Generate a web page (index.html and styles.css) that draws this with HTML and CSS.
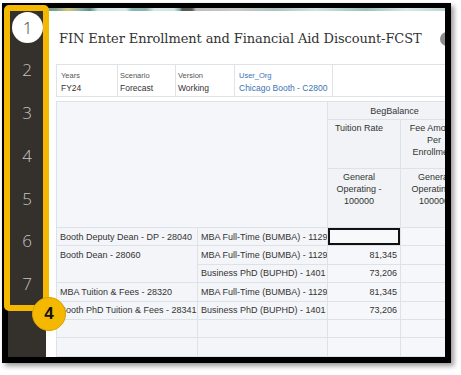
FILE: index.html
```html
<!DOCTYPE html>
<html>
<head>
<meta charset="utf-8">
<link rel="stylesheet" href="styles.css">
</head>
<body>
<div class="shot">
  <div class="frame">
    <aside class="rail">
      <ol class="steps">
        <li class="step active"><span class="dot">1</span></li>
        <li class="step">2</li>
        <li class="step">3</li>
        <li class="step">4</li>
        <li class="step">5</li>
        <li class="step">6</li>
        <li class="step">7</li>
      </ol>
    </aside>
    <main class="main">
      <div class="banner"></div>
      <header class="title-row">
        <h1 class="title">FIN Enter Enrollment and Financial Aid Discount-FCST</h1>
        <span class="info">i</span>
      </header>
      <div class="pov">
        <div class="pov-cell w1"><span class="pov-label">Years</span><span class="pov-value">FY24</span></div>
        <div class="pov-cell w2"><span class="pov-label">Scenario</span><span class="pov-value">Forecast</span></div>
        <div class="pov-cell w3"><span class="pov-label">Version</span><span class="pov-value">Working</span></div>
        <div class="pov-cell w4 link"><span class="pov-label">User_Org</span><span class="pov-value">Chicago Booth - C2800</span></div>
      </div>
      <table class="grid">
        <colgroup>
          <col class="c1"><col class="c2"><col class="c3"><col class="c4">
        </colgroup>
        <tr class="h1">
          <td class="corner" rowspan="3" colspan="2"></td>
          <th class="colhead span2" colspan="2">BegBalance</th>
        </tr>
        <tr class="h2">
          <th class="colhead top">Tuition Rate</th>
          <th class="colhead top narrow">Fee Amount Per Enrollment</th>
        </tr>
        <tr class="h3">
          <th class="colhead top">General Operating - 100000</th>
          <th class="colhead top narrow">General Operating - 100000</th>
        </tr>
        <tr class="row">
          <td class="rh">Booth Deputy Dean - DP - 28040</td>
          <td class="rh">MBA Full-Time (BUMBA) - 1129</td>
          <td class="num sel"></td>
          <td class="num"></td>
        </tr>
        <tr class="row">
          <td class="rh span" rowspan="2">Booth Dean - 28060</td>
          <td class="rh">MBA Full-Time (BUMBA) - 1129</td>
          <td class="num">81,345</td>
          <td class="num"></td>
        </tr>
        <tr class="row">
          <td class="rh">Business PhD (BUPHD) - 1401</td>
          <td class="num">73,206</td>
          <td class="num"></td>
        </tr>
        <tr class="row">
          <td class="rh">MBA Tuition &amp; Fees - 28320</td>
          <td class="rh">MBA Full-Time (BUMBA) - 1129</td>
          <td class="num">81,345</td>
          <td class="num"></td>
        </tr>
        <tr class="row">
          <td class="rh">Booth PhD Tuition &amp; Fees - 28341</td>
          <td class="rh">Business PhD (BUPHD) - 1401</td>
          <td class="num">73,206</td>
          <td class="num"></td>
        </tr>
        <tr class="row">
          <td class="rh"></td><td class="rh"></td><td class="num"></td><td class="num"></td>
        </tr>
        <tr class="row">
          <td class="rh"></td><td class="rh"></td><td class="num"></td><td class="num"></td>
        </tr>
      </table>
    </main>
  </div>
  <div class="callout"></div>
  <div class="badge">4</div>
</div>
</body>
</html>
```
FILE: styles.css
```css
html, body {
  margin: 0;
  padding: 0;
  background: #ffffff;
}

.shot {
  position: relative;
  width: 461px;
  height: 375px;
  overflow: hidden;
}

.frame {
  margin: 3px 0 0 2px;
  width: 437px;
  height: 349px;
  border-style: solid;
  border-color: #000;
  border-width: 5px 6px 6px 6px;
  display: flex;
  overflow: hidden;
  background: #fff;
  box-shadow: 3px 3px 5px rgba(0, 0, 0, 0.4);
}

/* left step rail */
.rail {
  flex: none;
  width: 38px;
  background: #34302c;
}

.steps {
  list-style: none;
  margin: -2.4px 0 0 0;
  padding: 0;
  display: flex;
  flex-direction: column;
}

.step {
  height: 42.8px;
  display: flex;
  align-items: center;
  justify-content: center;
  font-family: "Open Sans", "Noto Sans", sans-serif;
  font-weight: 300;
  font-size: 17px;
  color: #c4c4c4;
}

.dot {
  width: 31px;
  height: 31px;
  border-radius: 50%;
  background: #fff;
  color: #3a3a3a;
  display: flex;
  align-items: center;
  justify-content: center;
  margin-left: 1px;
}

/* main */
.main {
  flex: 1;
  min-width: 0;
  display: flex;
  flex-direction: column;
  overflow: hidden;
}

.banner {
  flex: none;
  height: 3px;
  background: linear-gradient(90deg,
    #6e978f 0px, #7aa095 10px, #d6c37d 22px, #8fb0a4 34px, #5f8f8a 44px,
    #cfe4e4 52px, #d9eaea 80px, #88b4b2 86px, #8ab5b3 100px, #d5e7e7 108px,
    #d2e5e5 128px, #7aa7a5 134px, #565656 136px, #5a5a5a 146px, #bdbdbd 150px,
    #c8c8c8 190px, #a9c4c2 230px, #cfe3e3 270px, #9cc0bd 320px, #d7e9e9 360px, #bcd6d4 399px);
}

.title-row {
  flex: none;
  display: flex;
  align-items: center;
  padding: 20px 0 0 13px;
  height: 16px;
  margin-bottom: 17px;
}

.title {
  margin: 0;
  font-family: "DejaVu Serif", "Liberation Serif", serif;
  font-weight: normal;
  font-size: 13px;
  line-height: 16px;
  color: #333;
  white-space: nowrap;
  letter-spacing: -0.1px;
}

.info {
  flex: none;
  margin-left: 18px;
  width: 14px;
  height: 14px;
  border-radius: 50%;
  background: #8c8c8c;
  color: #fff;
  font-family: "Liberation Sans", sans-serif;
  font-weight: bold;
  font-size: 10px;
  line-height: 14px;
  text-align: center;
}

/* POV bar */
.pov {
  flex: none;
  margin-left: 10px;
  height: 31px;
  border: 1px solid #dfe3e8;
  border-right: none;
  display: flex;
}

.pov-cell {
  flex: none;
  box-sizing: border-box;
  border-right: 1px solid #dfe3e8;
  padding: 6px 0 0 3px;
  display: flex;
  flex-direction: column;
  font-family: "Liberation Sans", sans-serif;
  color: #444;
}

.pov-cell.w1 { width: 61px; padding-left: 4px; }
.pov-cell.w2 { width: 58px; padding-left: 2px; }
.pov-cell.w3 { width: 59px; padding-left: 2px; }
.pov-cell.w4 { width: 98px; padding-left: 4px; }

.pov-label {
  font-size: 7.5px;
  line-height: 9px;
  color: #555;
}

.pov-value {
  margin-top: 3px;
  font-size: 8.5px;
  line-height: 11px;
  color: #333;
}

.link .pov-label,
.link .pov-value {
  color: #3b73b6;
}

/* grid */
.grid {
  flex: none;
  margin: 4px 0 0 10px;
  width: 417px;
  table-layout: fixed;
  border-collapse: collapse;
  font-family: "Liberation Sans", Arial, sans-serif;
  font-size: 9px;
  color: #333;
  background: #f4f6f9;
}

.c1 { width: 141px; }
.c2 { width: 130px; }
.c3 { width: 73px; }
.c4 { width: 73px; }

.grid td,
.grid th {
  border: 1px solid #dde2e8;
  padding: 0;
  overflow: hidden;
  white-space: nowrap;
}

.corner {
  background: #f4f6f9;
}

.h1 { height: 18px; }
.h2 { height: 49px; }
.h3 { height: 59px; }
.row { height: 18.4px; }

.colhead {
  font-weight: normal;
  background: #f1f3f6;
  text-align: center;
  line-height: 12px;
}

.colhead.span2 {
  padding-right: 12px;
}

.colhead.top {
  vertical-align: top;
  white-space: normal;
  padding: 2px 10px 0 0;
}

.colhead.top.narrow {
  padding: 2px 10px 0 4px;
}

.rh {
  background: #f3f5f8;
  padding-left: 3px !important;
  vertical-align: middle;
  line-height: 12px;
}

.rh.span {
  vertical-align: top;
  padding-top: 3px !important;
}

.num {
  background: #f6f7fa;
  text-align: right;
  padding-right: 3px !important;
  line-height: 12px;
}

.num.sel {
  position: relative;
  background: #f8f9fb;
  box-shadow: inset 0 0 0 2px #111;
}

.num.sel::after {
  content: "";
  position: absolute;
  right: -2px;
  bottom: -2px;
  width: 4px;
  height: 4px;
  background: #111;
}

/* annotation overlays */
.callout {
  position: absolute;
  left: 4px;
  top: 5px;
  width: 45px;
  height: 306px;
  box-sizing: border-box;
  border: 6px solid #f5b800;
  border-radius: 5px;
}

.badge {
  position: absolute;
  left: 32px;
  top: 297px;
  width: 34px;
  height: 34px;
  box-sizing: border-box;
  border-radius: 50%;
  background: #f5b800;
  border: 1px solid #d9a200;
  font-family: "Liberation Sans", Arial, sans-serif;
  font-weight: bold;
  font-size: 17px;
  line-height: 32px;
  text-align: center;
  color: #111;
}
```
